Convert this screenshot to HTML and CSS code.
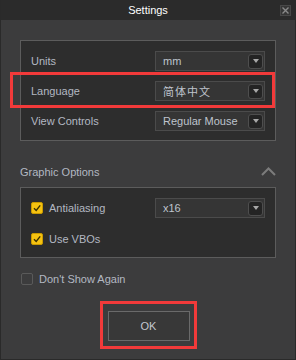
FILE: index.html
```html
<!DOCTYPE html>
<html lang="en">
<head>
    <meta charset="UTF-8">
    <meta name="viewport" content="width=device-width, initial-scale=1.0">
    <title>Settings</title>
    <link rel="stylesheet" href="styles.css">
</head>
<body>

    <div class="window">
        <div class="titlebar">
            <span></span>
            <span class="title">Settings</span>
            <span class="close">
                <svg width="7" height="7" viewBox="0 0 7 7"><path d="M0.5 0.5L6.5 6.5M6.5 0.5L0.5 6.5" stroke="#8a8a8a" stroke-width="1.4"/></svg>
            </span>
        </div>

        <div class="content">
            <div class="group group-main">
                <div class="row">
                    <label>Units</label>
                    <div class="combo"><span>mm</span><span class="arrow"></span></div>
                </div>
                <div class="row">
                    <label>Language</label>
                    <div class="combo"><span class="cjk">简体中文</span><span class="arrow"></span></div>
                </div>
                <div class="row">
                    <label>View Controls</label>
                    <div class="combo"><span>Regular Mouse</span><span class="arrow"></span></div>
                </div>
            </div>

            <div class="section-head">
                <span>Graphic Options</span>
                <svg width="15" height="9" viewBox="0 0 15 9"><path d="M1 8L7.5 1.5L14 8" fill="none" stroke="#7c7c7c" stroke-width="2"/></svg>
            </div>

            <div class="group group-graphic">
                <div class="row">
                    <div class="check-label"><span class="checkbox checked"><svg width="10" height="10" viewBox="0 0 10 10"><path d="M2 5.2L4.2 7.4L8.2 2.4" fill="none" stroke="#3a3000" stroke-width="1.4"/></svg></span>Antialiasing</div>
                    <div class="combo"><span>x16</span><span class="arrow"></span></div>
                </div>
                <div class="row">
                    <div class="check-label"><span class="checkbox checked"><svg width="10" height="10" viewBox="0 0 10 10"><path d="M2 5.2L4.2 7.4L8.2 2.4" fill="none" stroke="#3a3000" stroke-width="1.4"/></svg></span>Use VBOs</div>
                </div>
            </div>

            <div class="check-label dont-show"><span class="checkbox"></span>Don't Show Again</div>

            <div class="actions">
                <button class="ok">OK</button>
            </div>
        </div>

        <!-- highlight marks -->
        <div class="mark mark-language"></div>
        <div class="mark mark-ok"></div>
    </div>

</body>
</html>
```

FILE: styles.css
```css
body {
    margin: 0;
    font-family: "Liberation Sans", Arial, sans-serif;
    font-size: 11px;
    background: #3c3c3d;
}
.window {
    position: relative;
    width: 296px;
    height: 360px;
    box-sizing: border-box;
    background: #3c3c3d;
    border: 1px solid #2a2a2a;
    border-top: none;
    overflow: hidden;
}
.titlebar {
    height: 20px;
    margin: 0 -1px;
    background: #2b2b2b;
    display: grid;
    grid-template-columns: 1fr auto 1fr;
    align-items: center;
}
.title {
    color: #ffffff;
    line-height: 20px;
}
.close {
    justify-self: end;
    margin-right: 5px;
    width: 9px;
    height: 9px;
    border: 1px solid #484848;
    background: #363636;
    display: flex;
    align-items: center;
    justify-content: center;
}
.content {
    padding: 20px 19px 0 19px;
}
.group {
    background: #2d2d2d;
    border: 1px solid #5c5c5c;
    display: flex;
    flex-direction: column;
}
.group-main {
    padding: 10px 10px 9px 10px;
    gap: 10px;
}
.group-graphic {
    margin-top: 5px;
    padding: 10px 10px 8px 10px;
    gap: 11px;
}
.row {
    height: 20px;
    display: grid;
    grid-template-columns: 1fr 110px;
    align-items: center;
}
label, .check-label {
    color: #b3b8c2;
}
.combo {
    height: 20px;
    box-sizing: border-box;
    background: #353535;
    border: 1px solid #4b4b4b;
    display: flex;
    align-items: center;
    justify-content: space-between;
    padding: 0 1px 0 7px;
    color: #bfc4cd;
}
.cjk {
    font-family: "Noto Sans CJK SC", "Liberation Sans", sans-serif;
    letter-spacing: 1px;
}
.arrow {
    width: 15px;
    height: 15px;
    box-sizing: border-box;
    background: #242424;
    border: 1px solid #4e4e4e;
    border-radius: 3px;
    display: flex;
    align-items: center;
    justify-content: center;
}
.arrow::after {
    content: "";
    border-left: 3px solid transparent;
    border-right: 3px solid transparent;
    border-top: 4px solid #a8a8a8;
}
.section-head {
    margin-top: 21px;
    height: 20px;
    display: flex;
    align-items: center;
    justify-content: space-between;
    color: #b3b8c2;
}
.section-head svg {
    margin-bottom: 2px;
}
.check-label {
    display: flex;
    align-items: center;
    gap: 6px;
}
.checkbox {
    width: 12px;
    height: 12px;
    box-sizing: border-box;
    border: 1px solid #5a5a5a;
    border-radius: 2px;
    display: flex;
    align-items: center;
    justify-content: center;
}
.checkbox.checked {
    background: #f5c211;
    border-color: #c99a00;
}
.dont-show {
    margin-top: 11px;
    height: 20px;
    padding-left: 1px;
}
.actions {
    display: flex;
    justify-content: center;
    margin-top: 22px;
}
.ok {
    width: 82px;
    height: 30px;
    background: #383838;
    border: 1px solid #6a6a6a;
    color: #c3c7cf;
    font-family: "Liberation Sans", Arial, sans-serif;
    font-size: 11px;
    margin-left: 1px;
}
.mark {
    position: absolute;
    border: 3px solid #f23a3a;
    box-sizing: border-box;
}
.mark-language {
    left: 9px;
    top: 72px;
    width: 265px;
    height: 36px;
}
.mark-ok {
    left: 99px;
    top: 301px;
    width: 97px;
    height: 48px;
}
```
